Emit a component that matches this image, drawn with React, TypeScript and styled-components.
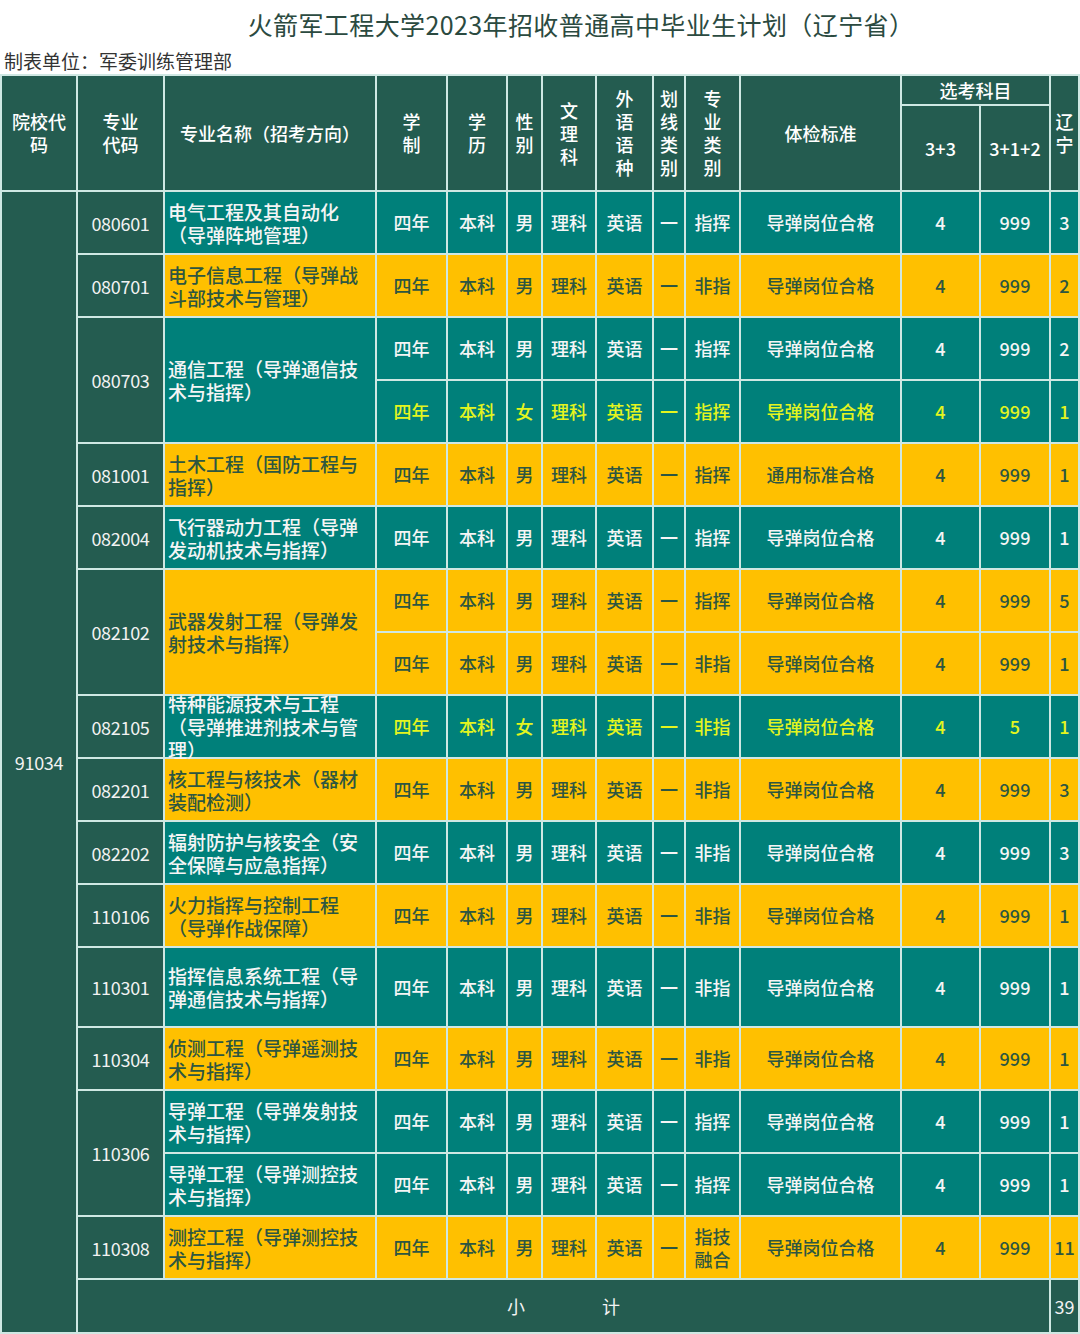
import styled, { createGlobalStyle } from 'styled-components';

const GlobalStyle = createGlobalStyle`
    body {
        margin: 0;
        background: #fff;
        font-family: "Noto Sans CJK SC", "Noto Sans", sans-serif;
    }
`;

const DARK = '#245c50';
const TEAL = '#00807a';
const GOLD = '#ffc000';
const LINE = '#cfe8e3';

type Tone = 'teal' | 'gold';

const Page = styled.div`
    width: 1080px;
`;

const Title = styled.div`
    height: 48px;
    display: flex;
    align-items: center;
    justify-content: center;
    padding-left: 82px;
    font-size: 25px;
    color: #2b4a40;
    letter-spacing: 0.4px;
`;

const Unit = styled.div`
    height: 26px;
    line-height: 26px;
    padding-left: 4px;
    font-size: 19px;
    color: #333;
`;

const Table = styled.table`
    border-collapse: collapse;
    table-layout: fixed;
    width: 1078px;
`;

const Th = styled.th<{ $h?: number }>`
    background: ${DARK};
    color: #fff;
    font-size: 18px;
    font-weight: 500;
    height: ${(p) => p.$h ?? 28}px;
    padding: 0 6px;
    border: 2px solid ${LINE};
    text-align: center;
    vertical-align: middle;
    line-height: 23px;
`;

const Stack = styled.div`
    display: flex;
    flex-direction: column;
    align-items: center;
    line-height: 23px;
`;

const Td = styled.td<{ $tone: Tone; $accent?: boolean; $h?: number }>`
    background: ${(p) => (p.$tone === 'teal' ? TEAL : GOLD)};
    color: ${(p) => (p.$accent ? '#e4f51e' : p.$tone === 'teal' ? '#f5f5f5' : '#2d5641')};
    font-size: 18px;
    font-weight: 500;
    height: ${(p) => p.$h ?? 61}px;
    padding: 0;
    border: 2px solid ${LINE};
    text-align: center;
    vertical-align: middle;
    line-height: 23px;
    white-space: nowrap;
`;

const CodeTd = styled.td`
    background: ${DARK};
    color: #f2f2f2;
    font-size: 18px;
    padding: 0;
    border: 2px solid ${LINE};
    text-align: center;
    vertical-align: middle;
    letter-spacing: -0.3px;
`;

const NameTd = styled(Td)`
    text-align: left;
    padding-left: 3px;
    white-space: normal;
    font-size: 19px;
    line-height: 23px;
`;

const NameBox = styled.div<{ $fixed?: boolean }>`
    width: 200px;
    height: ${(p) => (p.$fixed ? '61px' : 'auto')};
    display: flex;
    align-items: center;
`;

const TotalCell = styled.td`
    background: ${DARK};
    color: #f2f2f2;
    font-size: 18px;
    height: 52px;
    padding: 0;
    border: 2px solid ${LINE};
    text-align: center;
    vertical-align: middle;
`;

const Spread = styled.div`
    display: flex;
    justify-content: center;
    gap: 77px;
`;

type Row = {
    code?: string;
    codeSpan?: number;
    name?: string;
    nameSpan?: number;
    tone: Tone;
    accent?: boolean;
    gender: string;
    kind: string;
    exam: string;
    s33: string;
    total: string;
    h?: number;
};

const rows: Row[] = [
    { code: '080601', name: '电气工程及其自动化（导弹阵地管理）', tone: 'teal', gender: '男', kind: '指挥', exam: '导弹岗位合格', s33: '999', total: '3' },
    { code: '080701', name: '电子信息工程（导弹战斗部技术与管理）', tone: 'gold', gender: '男', kind: '非指', exam: '导弹岗位合格', s33: '999', total: '2' },
    { code: '080703', codeSpan: 2, name: '通信工程（导弹通信技术与指挥）', nameSpan: 2, tone: 'teal', gender: '男', kind: '指挥', exam: '导弹岗位合格', s33: '999', total: '2' },
    { tone: 'teal', accent: true, gender: '女', kind: '指挥', exam: '导弹岗位合格', s33: '999', total: '1' },
    { code: '081001', name: '土木工程（国防工程与指挥）', tone: 'gold', gender: '男', kind: '指挥', exam: '通用标准合格', s33: '999', total: '1' },
    { code: '082004', name: '飞行器动力工程（导弹发动机技术与指挥）', tone: 'teal', gender: '男', kind: '指挥', exam: '导弹岗位合格', s33: '999', total: '1' },
    { code: '082102', codeSpan: 2, name: '武器发射工程（导弹发射技术与指挥）', nameSpan: 2, tone: 'gold', gender: '男', kind: '指挥', exam: '导弹岗位合格', s33: '999', total: '5' },
    { tone: 'gold', gender: '男', kind: '非指', exam: '导弹岗位合格', s33: '999', total: '1' },
    { code: '082105', name: '特种能源技术与工程（导弹推进剂技术与管理）', tone: 'teal', accent: true, gender: '女', kind: '非指', exam: '导弹岗位合格', s33: '5', total: '1' },
    { code: '082201', name: '核工程与核技术（器材装配检测）', tone: 'gold', gender: '男', kind: '非指', exam: '导弹岗位合格', s33: '999', total: '3' },
    { code: '082202', name: '辐射防护与核安全（安全保障与应急指挥）', tone: 'teal', gender: '男', kind: '非指', exam: '导弹岗位合格', s33: '999', total: '3' },
    { code: '110106', name: '火力指挥与控制工程（导弹作战保障）', tone: 'gold', gender: '男', kind: '非指', exam: '导弹岗位合格', s33: '999', total: '1' },
    { code: '110301', name: '指挥信息系统工程（导弹通信技术与指挥）', tone: 'teal', gender: '男', kind: '非指', exam: '导弹岗位合格', s33: '999', total: '1', h: 78 },
    { code: '110304', name: '侦测工程（导弹遥测技术与指挥）', tone: 'gold', gender: '男', kind: '非指', exam: '导弹岗位合格', s33: '999', total: '1' },
    { code: '110306', codeSpan: 2, name: '导弹工程（导弹发射技术与指挥）', tone: 'teal', gender: '男', kind: '指挥', exam: '导弹岗位合格', s33: '999', total: '1' },
    { name: '导弹工程（导弹测控技术与指挥）', tone: 'teal', gender: '男', kind: '指挥', exam: '导弹岗位合格', s33: '999', total: '1' },
    { code: '110308', name: '测控工程（导弹测控技术与指挥）', tone: 'gold', gender: '男', kind: '指技\n融合', exam: '导弹岗位合格', s33: '999', total: '11' },
];

// 列宽（与截图的竖线位置对齐）
const widths = [76, 87, 212, 71, 60, 35, 54, 57, 32, 55, 161, 79, 70, 29];

const stack = (text: string) => (
    <Stack>
        {[...text].map((c, i) => (
            <span key={i}>{c}</span>
        ))}
    </Stack>
);

const App: React.FC = () => {
    return (
        <Page>
            <GlobalStyle />
            <Title>火箭军工程大学2023年招收普通高中毕业生计划（辽宁省）</Title>
            <Unit>制表单位：军委训练管理部</Unit>
            <Table>
                <colgroup>
                    {widths.map((w, i) => (
                        <col key={i} style={{ width: w }} />
                    ))}
                </colgroup>
                <thead>
                    <tr>
                        <Th rowSpan={2}>院校代码</Th>
                        <Th rowSpan={2}>
                            专业
                            <br />
                            代码
                        </Th>
                        <Th rowSpan={2}>专业名称（招考方向）</Th>
                        <Th rowSpan={2}>{stack('学制')}</Th>
                        <Th rowSpan={2}>{stack('学历')}</Th>
                        <Th rowSpan={2} style={{ padding: 0 }}>{stack('性别')}</Th>
                        <Th rowSpan={2}>{stack('文理科')}</Th>
                        <Th rowSpan={2}>{stack('外语语种')}</Th>
                        <Th rowSpan={2} style={{ padding: 0 }}>{stack('划线类别')}</Th>
                        <Th rowSpan={2}>{stack('专业类别')}</Th>
                        <Th rowSpan={2}>体检标准</Th>
                        <Th colSpan={2}>选考科目</Th>
                        <Th rowSpan={2} style={{ padding: 0 }}>{stack('辽宁')}</Th>
                    </tr>
                    <tr>
                        <Th $h={84}>3+3</Th>
                        <Th $h={84}>3+1+2</Th>
                    </tr>
                </thead>
                <tbody>
                    {rows.map((row, idx) => (
                        <tr key={idx}>
                            {idx === 0 && <CodeTd rowSpan={rows.length + 1}>91034</CodeTd>}
                            {row.code && <CodeTd rowSpan={row.codeSpan ?? 1}>{row.code}</CodeTd>}
                            {row.name && (
                                <NameTd $tone={row.tone} rowSpan={row.nameSpan ?? 1} $h={row.h}>
                                    <NameBox $fixed={!row.nameSpan && !row.h}>{row.name}</NameBox>
                                </NameTd>
                            )}
                            <Td $tone={row.tone} $accent={row.accent} $h={row.h}>四年</Td>
                            <Td $tone={row.tone} $accent={row.accent}>本科</Td>
                            <Td $tone={row.tone} $accent={row.accent}>{row.gender}</Td>
                            <Td $tone={row.tone} $accent={row.accent}>理科</Td>
                            <Td $tone={row.tone} $accent={row.accent}>英语</Td>
                            <Td $tone={row.tone} $accent={row.accent}>一</Td>
                            <Td $tone={row.tone} $accent={row.accent}>{stackLines(row.kind)}</Td>
                            <Td $tone={row.tone} $accent={row.accent}>{row.exam}</Td>
                            <Td $tone={row.tone} $accent={row.accent}>4</Td>
                            <Td $tone={row.tone} $accent={row.accent}>{row.s33}</Td>
                            <Td $tone={row.tone} $accent={row.accent}>{row.total}</Td>
                        </tr>
                    ))}
                    <tr>
                        <TotalCell colSpan={12}>
                            <Spread>
                                <span>小</span>
                                <span>计</span>
                            </Spread>
                        </TotalCell>
                        <TotalCell>39</TotalCell>
                    </tr>
                </tbody>
            </Table>
        </Page>
    );
};

const stackLines = (text: string) =>
    text.includes('\n') ? (
        <Stack>
            {text.split('\n').map((k, i) => (
                <span key={i}>{k}</span>
            ))}
        </Stack>
    ) : (
        text
    );

export default App;
